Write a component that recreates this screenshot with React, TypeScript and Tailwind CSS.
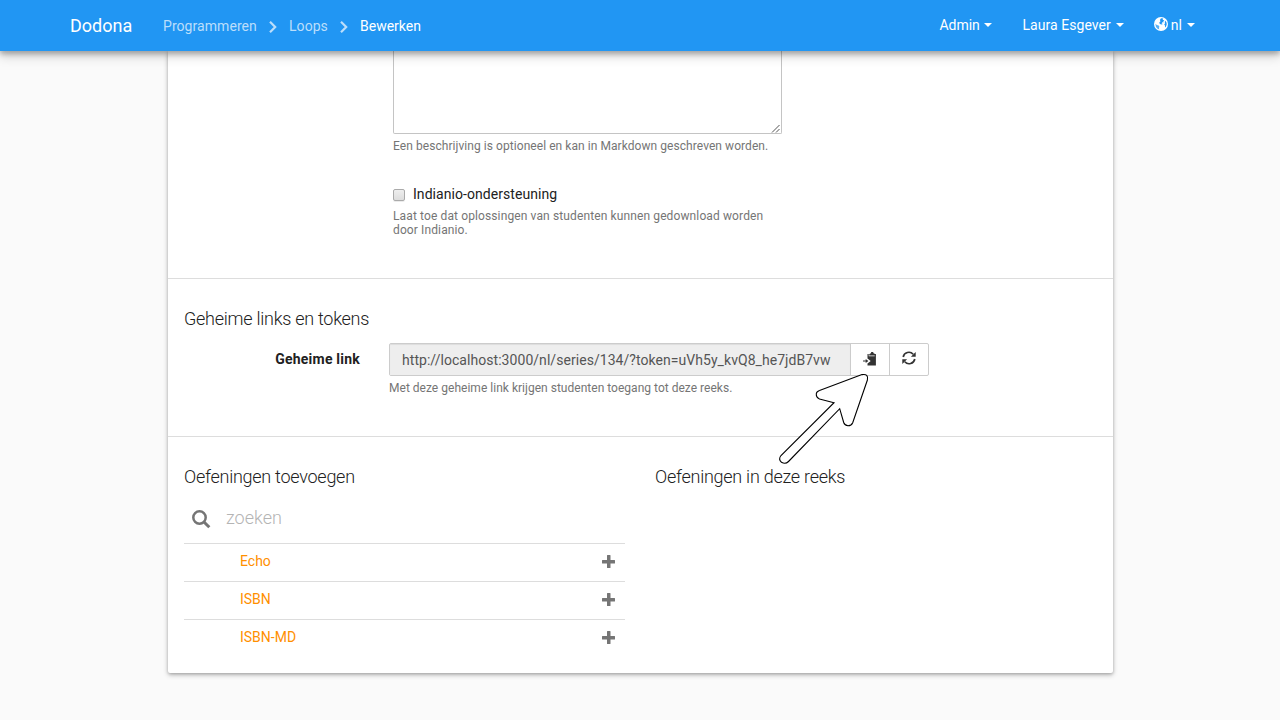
import React from "react";

const Caret = () => (
  <span className="ml-[5px] h-0 w-0 border-x-4 border-t-4 border-x-transparent border-t-white" />
);

const Chevron = () => (
  <svg className="mx-[11px] mt-[1px] shrink-0" width="10" height="14" viewBox="0 0 10 14" fill="none">
    <path d="M2 1.800 7.200 7 2 12.200" stroke="#bbdefb" strokeWidth="2.200" />
  </svg>
);

const Plus = () => (
  <svg width="13" height="13" viewBox="0 0 13 13" className="shrink-0">
    <path d="M5.500 0h2.500q.5 0 .5.5V5h4q.5 0 .5.5V8q0 .5-.5.5h-4v4q0 .5-.5.5H5.500q-.5 0-.5-.5v-4H.5Q0 8.500 0 8V5.500Q0 5 .5 5H5V.5q0-.5.5-.5z" fill="#757575" />
  </svg>
);

const Globe = () => (
  <svg width="14" height="14" viewBox="0 0 14 14" className="mr-[3px] -mt-[3px]">
    <circle cx="7" cy="7" r="7" fill="#fff" />
    <path d="M7 1.300 9.300 1.500 8.600 2.700 10.400 3.400 9.200 4.300 9.800 5.200 8.300 5.300 7.600 6.500 8.900 7.100 7.700 7.600 5.800 6.900 5.300 5.500 6.500 4.300 5.900 3.100z" fill="#2196f3" />
    <path d="M11.400 3.700 12.600 5.800 12.700 7.600 12 9.500 11 10.600 11 8.600 10.200 7.200 11.200 6.300 10.700 5z" fill="#2196f3" />
    <path d="M1.400 6.800 2.900 7.900 4.700 8.500 5.400 9.800 4.900 11 5.300 12.500 3.300 11.500 1.900 9.700z" fill="#2196f3" opacity=".75" />
  </svg>
);

const Row = ({ name }: { name: string }) => (
  <div className="flex h-[38px] items-center justify-between border-t border-[#dddddd] pr-[10px] pb-[2px] pl-14">
    <span className="pb-[2px] text-sm text-[#ff8f00]">{name}</span>
    <Plus />
  </div>
);

const heading = "text-[18px] leading-5 font-light whitespace-nowrap tracking-[-0.26px]";

export default function App() {
  return (
    <div className="relative flex h-[720px] w-[1280px] flex-col overflow-hidden bg-[#fafafa] font-['Roboto',sans-serif] text-sm leading-5 text-[#212121]">
      <header className="z-10 flex h-[51px] shrink-0 items-center justify-between bg-[#2196f3] pr-[85px] pl-[70px] text-white shadow-[0_5px_11px_rgba(0,0,0,0.18),0_3px_5px_rgba(0,0,0,0.25)]">
        <div className="flex items-center">
          <span className="w-[93px] text-[18px]">Dodona</span>
          <nav className="flex items-center pt-[1px]">
            <span className="w-[94px] tracking-[0.06px] text-[#bbdefb]">Programmeren</span>
            <Chevron />
            <span className="w-[39px] tracking-[0.06px] text-[#bbdefb]">Loops</span>
            <Chevron />
            <span>Bewerken</span>
          </nav>
        </div>
        <div className="flex items-center gap-[30px] pb-[1px]">
          <span className="flex items-center"><span className="w-10">Admin</span><Caret /></span>
          <span className="flex items-center tracking-[0.06px]">Laura Esgever<Caret /></span>
          <span className="flex items-center"><Globe />nl<Caret /></span>
        </div>
      </header>

      <main className="ml-[168px] flex h-[622px] w-[945px] shrink-0 flex-col rounded-b-[2px] bg-white shadow-[0_2px_5px_rgba(0,0,0,0.26),0_1px_3px_rgba(0,0,0,0.16)]">
        <section className="h-[228px] shrink-0 border-b border-[#dddddd] pl-[225px]">
          <div className="flex h-[83px] w-[389px] items-end justify-end rounded-b-[2px] border border-t-0 border-[#c4c4c4] pr-[1px]">
            <svg width="9" height="9" viewBox="0 0 9 9">
              <path d="M1 8.500 8.500 1M5 8.500 8.500 5" stroke="#555" strokeWidth="1" />
            </svg>
          </div>
          <p className="mt-[5px] text-xs leading-[14px] tracking-[0.06px] text-[#757575]">
            Een beschrijving is optioneel en kan in Markdown geschreven worden.
          </p>
          <div className="mt-[31px] flex items-center">
            <span className="mt-[1px] mr-[8px] h-3 w-3 rounded-[2px] border border-[#aaaaaa] bg-linear-to-b from-[#eeeeee] to-[#dddddd] shadow-[0_1px_0_rgba(0,0,0,0.08)]" />
            <span className="tracking-[0.06px]">Indianio-ondersteuning</span>
          </div>
          <p className="mt-[5px] w-[389px] text-xs leading-[14px] tracking-[0.12px] text-[#757575]">
            Laat toe dat oplossingen van studenten kunnen gedownload worden<br />
            door Indianio.
          </p>
        </section>

        <section className="h-[158px] shrink-0 border-b border-[#dddddd] px-4 pt-[30px]">
          <h2 className={heading}>Geheime links en tokens</h2>
          <div className="mt-[14px] flex">
            <div className="w-[205px] pt-[6px] pr-[29px] text-right font-bold tracking-[0.22px]">Geheime link</div>
            <div>
              <div className="flex h-[33px] w-[540px] rounded-[2px] border border-[#cccccc]">
                <div className="flex w-[460px] shrink-0 items-center bg-[#eeeeee] pl-3 tracking-[0.05px] text-[#555555] shadow-[inset_0_1px_1px_rgba(0,0,0,0.075)]">
                  http://localhost:3000/nl/series/134/?token=uVh5y_kvQ8_he7jdB7vw
                </div>
                <div className="flex w-[39px] shrink-0 border-l border-[#cccccc] pt-[7px] pl-[11px]">
                  <svg width="15" height="16" viewBox="0 0 15 16" fill="#333">
                    <path d="M5.500 3h1.200v2.200h6V3h1.200v11.500H5.500v-2L8.700 10 5.500 7.500z" />
                    <path d="M7.200 4.600V3.200l1.500-1h.4V1.100h2.200v1.100h.6l1.300 1v1.400z" />
                    <path d="M1 9.400h2.700V7.900L6.400 10 3.700 12.100v-1.500H1z" />
                  </svg>
                </div>
                <div className="flex w-[39px] shrink-0 border-l border-[#cccccc] pt-[7px] pl-[12px]">
                  <svg width="14" height="14" viewBox="0 0 14 14">
                    <path d="M1.200 6A5.800 5.800 0 0 1 11.200 3.200M12.800 8A5.800 5.800 0 0 1 2.800 10.800" fill="none" stroke="#333" strokeWidth="1.700" />
                    <path d="M13.700.9v4.800H8.900zM.3 13.100V8.300h4.800z" fill="#333" />
                  </svg>
                </div>
              </div>
              <p className="mt-[5px] text-xs leading-[14px] tracking-[0.02px] text-[#757575]">
                Met deze geheime link krijgen studenten toegang tot deze reeks.
              </p>
            </div>
          </div>
        </section>

        <section className="flex flex-1 gap-[30px] px-4 pt-[30px]">
          <div className="w-[441px]">
            <h2 className={heading}>Oefeningen toevoegen</h2>
            <div className="mt-[14px] flex h-[42px] items-start pl-[8px]">
              <svg className="mt-[9px] mr-[15px]" width="19" height="19" viewBox="0 0 19 19" fill="none" stroke="#757575">
                <circle cx="7.500" cy="7.500" r="6.200" strokeWidth="2.500" />
                <path d="M12 12l5.300 5.300" strokeWidth="3" />
              </svg>
              <span className="mt-[7px] text-[18px] font-light text-[#b4b4b4]">zoeken</span>
            </div>
            <Row name="Echo" />
            <Row name="ISBN" />
            <Row name="ISBN-MD" />
          </div>
          <div className="flex-1">
            <h2 className={heading}>Oefeningen in deze reeks</h2>
          </div>
        </section>
      </main>

      <svg className="absolute top-[370px] left-[775px] z-20" width="98" height="98" viewBox="775 370 98 98">
        <path d="M862 374.600 Q868.700 373.500 867.400 380 L852.700 422.700 Q851.500 425.700 848 425.700 Q844.700 425.500 843.700 422.500 L839.700 408.700 L788.500 461.500 Q785.500 464.500 781.500 462.300 Q778 459.200 781 455.500 L834 402.700 L819.500 399 Q816 397.500 816.300 393.800 Q816.500 391.500 819.500 390.500 Z" fill="#fff" stroke="#000" strokeWidth="1.100" />
      </svg>
    </div>
  );
}
